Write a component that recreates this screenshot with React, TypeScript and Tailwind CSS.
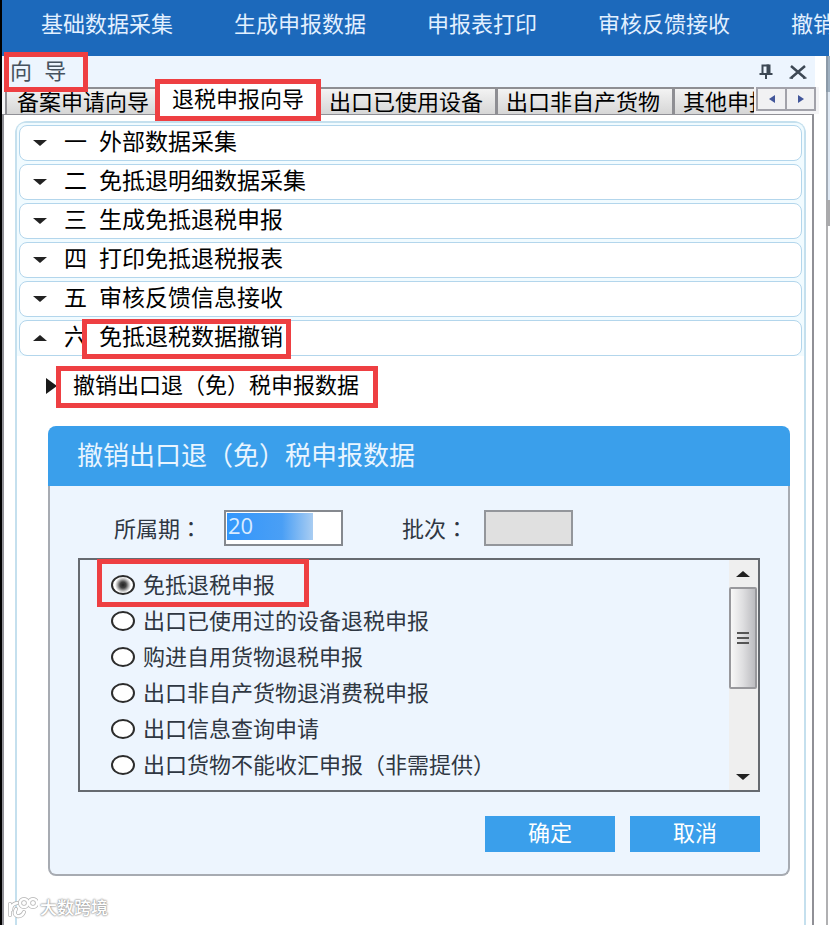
import { useState } from 'react';
import { clsx } from 'clsx';

const MENU_ITEMS = ['基础数据采集', '生成申报数据', '申报表打印', '审核反馈接收', '撤销申报数据'];

const TABS = [
  { label: '备案申请向导', key: 'record' },
  { label: '退税申报向导', key: 'refund' },
  { label: '出口已使用设备', key: 'device' },
  { label: '出口非自产货物', key: 'goods' },
  { label: '其他申报向导', key: 'other' },
];

const STEPS = [
  { no: '一', label: '外部数据采集' },
  { no: '二', label: '免抵退明细数据采集' },
  { no: '三', label: '生成免抵退税申报' },
  { no: '四', label: '打印免抵退税报表' },
  { no: '五', label: '审核反馈信息接收' },
  { no: '六', label: '免抵退税数据撤销' },
];

const OPTIONS = [
  '免抵退税申报',
  '出口已使用过的设备退税申报',
  '购进自用货物退税申报',
  '出口非自产货物退消费税申报',
  '出口信息查询申请',
  '出口货物不能收汇申报（非需提供）',
];

function Mark({ className }: { className: string }) {
  return <span className={clsx('pointer-events-none absolute z-10 border-[5px] border-[#ee3f42]', className)} />;
}

function Colon() {
  return <span className="font-['Noto_Sans_CJK_TC',sans-serif]">：</span>;
}

function Arrow({ up = false, className }: { up?: boolean; className?: string }) {
  return (
    <svg viewBox="0 0 16 8" className={clsx('h-2 w-4 shrink-0', className)}>
      <path d={up ? 'M1 7 L8 1 L15 7 Z' : 'M1 1 H15 L8 7 Z'} fill="#222" />
    </svg>
  );
}

function TopMenu() {
  return (
    <nav className="mr-px flex h-14 items-center gap-[61px] overflow-hidden bg-[#1c69bb] pb-1.5 pl-[39px]">
      {MENU_ITEMS.map((item) => (
        <a key={item} href="#" className="shrink-0 whitespace-nowrap text-[22px] leading-8 text-[#e2f0ff]">
          {item}
        </a>
      ))}
    </nav>
  );
}

function PanelTitle() {
  return (
    <div className="mr-1 flex h-[31px] items-center justify-between bg-[#edf5fe] pr-2 pl-2 text-[#46525f]">
      <h1 className="relative text-[22px] leading-8">
        向&nbsp;&nbsp;导
        <Mark className="-top-1 -left-1.5 h-10 w-[84px]" />
      </h1>
      <div className="flex items-center gap-4">
        <button type="button" aria-label="固定">
          <svg viewBox="0 0 14 15" className="h-[15px] w-3.5" fill="none" stroke="#3d4854">
            <path d="M3.5 9.5 V1.5 H10" strokeWidth="2" />
            <path d="M9.5 0.5 V9.5" strokeWidth="4" />
            <path d="M0.5 10 H13.5" strokeWidth="2" />
            <path d="M7 10 V15" strokeWidth="2" />
          </svg>
        </button>
        <button type="button" aria-label="关闭">
          <svg viewBox="0 0 18 14" className="h-3.5 w-[18px]" fill="none" stroke="#3d4854">
            <path d="M2 1 L16 13 M16 1 L2 13" strokeWidth="2.5" />
            <path d="M0.5 13 H4 M14 13 H17.5" strokeWidth="1.5" />
          </svg>
        </button>
      </div>
    </div>
  );
}

function TabBar({ active, onSelect }: { active: string; onSelect: (key: string) => void }) {
  return (
    <div className="flex h-[27px] bg-[#f4f4f6]">
      <div role="tablist" className="flex min-w-0 flex-1 pl-[3px]">
        <div className="flex min-w-0 flex-1 border-l-2 border-[#8e8e93]">
          {TABS.map((tab, i) =>
            tab.key === active ? (
              <div key={tab.key} className="relative shrink-0">
                <button
                  type="button"
                  role="tab"
                  aria-selected
                  className="relative z-20 px-[17px] text-[22px] leading-[26px] whitespace-nowrap text-black"
                >
                  {tab.label}
                </button>
                <Mark className="-top-2 left-0 h-[42px] w-full bg-white" />
              </div>
            ) : (
              <button
                key={tab.key}
                type="button"
                role="tab"
                aria-selected={false}
                onClick={() => onSelect(tab.key)}
                className={clsx(
                  'h-full border-t-2 border-[#8e8e93] bg-linear-to-b from-[#f3f3f3] to-[#d6d6d6] text-left text-[22px] leading-[28px] whitespace-nowrap text-black',
                  i === 0 ? 'shrink-0 pr-1.5 pl-2.5' : 'pl-2',
                  i > 0 && i < TABS.length - 1 && 'shrink-0 border-r-3 pr-3',
                  i === TABS.length - 1 && 'min-w-0 flex-1 overflow-hidden'
                )}
              >
                {tab.label}
              </button>
            )
          )}
        </div>
      </div>
      <div className="mr-[3px] ml-0.5 flex h-6 w-[60px] shrink-0 border-2 border-[#a2a2aa] bg-[#f1f1f3]">
        <button type="button" aria-label="向左" className="flex flex-1 items-center justify-center border-r-2 border-[#a2a2aa]">
          <svg viewBox="0 0 6 8" className="h-2 w-1.5">
            <path d="M6 0 L0 4 L6 8 Z" fill="#42569a" />
          </svg>
        </button>
        <button type="button" aria-label="向右" className="flex flex-1 items-center justify-center">
          <svg viewBox="0 0 6 8" className="h-2 w-1.5">
            <path d="M0 0 L6 4 L0 8 Z" fill="#42569a" />
          </svg>
        </button>
      </div>
    </div>
  );
}

function Steps({ open, onToggle }: { open: number; onToggle: (i: number) => void }) {
  return (
    <div className="flex flex-col gap-[3px] rounded-t-lg bg-[#f1fbff] p-0.5 pb-0">
      {STEPS.map((step, i) => (
        <button
          key={step.no}
          type="button"
          aria-expanded={open === i}
          onClick={() => onToggle(i)}
          className="flex h-9 items-center rounded-lg border border-[#b3d6ec] bg-white pb-0.5 pl-3 text-left text-[23px] leading-8 text-black"
        >
          <Arrow up={open === i} className="mt-0.5" />
          <span className="ml-4">{step.no}</span>
          <span className="relative ml-3 whitespace-nowrap">
            {step.label}
            {open === i && <Mark className="-top-0.5 -right-2 -left-[17px] h-10" />}
          </span>
        </button>
      ))}
    </div>
  );
}

function ScrollBar() {
  return (
    <div className="flex w-[29px] shrink-0 flex-col items-center bg-[#efefef] pr-px">
      <button type="button" aria-label="向上滚动" className="flex h-[27px] w-full items-center justify-center">
        <Arrow up />
      </button>
      <div className="flex h-[102px] w-full flex-col items-center justify-center gap-[3px] rounded-xs border-2 border-[#98989c] bg-linear-to-r from-[#f8f8f8] via-[#dedee0] to-[#bcbcc0]">
        <span className="h-0.5 w-3 bg-[#555]" />
        <span className="h-0.5 w-3 bg-[#555]" />
        <span className="h-0.5 w-3 bg-[#555]" />
      </div>
      <button type="button" aria-label="向下滚动" className="mt-auto flex h-[27px] w-full items-center justify-center">
        <Arrow />
      </button>
    </div>
  );
}

function RevokeForm() {
  const [period, setPeriod] = useState('20');
  const [choice, setChoice] = useState(OPTIONS[0]);

  return (
    <form onSubmit={(e) => e.preventDefault()} className="mt-[22px] mr-3 ml-[29px]">
      <h2 className="h-[60px] rounded-t-lg bg-[#3a9feb] pl-[29px] text-[26px] leading-[60px] text-[#e9f5ff]">
        撤销出口退（免）税申报数据
      </h2>
      <div className="rounded-b-lg border-2 border-t-0 border-[#a7abb2] bg-[#edf5fe] px-7 pt-6 pb-[22px] text-[22px] text-[#2f3742]">
        <div className="flex items-center pl-9">
          <label htmlFor="period" className="w-[110px] whitespace-nowrap">
            所属期
            <Colon />
          </label>
          <input
            id="period"
            type="text"
            value={period}
            onChange={(e) => setPeriod(e.target.value)}
            className="h-9 w-[119px] border-2 border-[#85898f] bg-white bg-[linear-gradient(to_right,#3396fb_0,#4a9ff5_55px,#a9cdf2_86px)] bg-[length:86px_27px] bg-[position:1px_1px] bg-no-repeat px-0.5 pb-1.5 font-['Open_Sans',sans-serif] text-[22px] leading-7 text-[#d9ebff] outline-none"
          />
          <label htmlFor="batch" className="ml-[59px] w-[82px] whitespace-nowrap">
            批次
            <Colon />
          </label>
          <input id="batch" type="text" disabled className="h-9 w-[89px] border-2 border-[#93969b] bg-[#e0e0e0]" />
        </div>

        <div className="mt-3 flex h-[234px] border-2 border-[#666a70]">
          <div className="flex flex-1 flex-col pt-[7px] pl-[31px]">
            {OPTIONS.map((option) => (
              <label key={option} className="relative flex h-9 items-center gap-2 self-start whitespace-nowrap">
                <input
                  type="radio"
                  name="declare"
                  checked={choice === option}
                  onChange={() => setChoice(option)}
                  className="h-5 w-6 shrink-0 appearance-none rounded-[50%] border-2 border-[#2c2c2c] bg-white checked:bg-[radial-gradient(circle,#222_0,#444_3px,#bbb_6px,#fff_8px)]"
                />
                {option}
                {option === OPTIONS[0] && <Mark className="-top-2 -left-3.5 h-12 w-[212px]" />}
              </label>
            ))}
          </div>
          <ScrollBar />
        </div>

        <div className="mt-6 flex justify-end gap-[15px]">
          <button type="submit" className="h-9 w-[130px] bg-[#3a9feb] leading-9 text-white">
            确定
          </button>
          <button type="button" className="h-9 w-[130px] bg-[#3a9feb] leading-9 text-white">
            取消
          </button>
        </div>
      </div>
    </form>
  );
}

function Watermark() {
  return (
    <div className="absolute bottom-1 left-1.5 flex items-center gap-0.5 text-[17px] leading-6 font-medium text-white [text-shadow:0_0_2px_#999,0_0_2px_#999,0_0_1px_#aaa]">
      <svg viewBox="0 0 30 24" className="h-6 w-[30px]" fill="none" strokeLinecap="round">
        <g stroke="#b5b5b5" strokeWidth="4">
          <path d="M2 7 V18 M3 13 Q3 7 9 6 M16 15 Q14 20 9 19 Q5 17 8 12" />
          <circle cx="16" cy="6" r="4" />
          <circle cx="25" cy="6" r="4" />
        </g>
        <g stroke="#fff" strokeWidth="2.5">
          <path d="M2 7 V18 M3 13 Q3 7 9 6 M16 15 Q14 20 9 19 Q5 17 8 12" />
          <circle cx="16" cy="6" r="4" />
          <circle cx="25" cy="6" r="4" />
        </g>
      </svg>
      大数跨境
    </div>
  );
}

export default function App() {
  const [tab, setTab] = useState('refund');
  const [open, setOpen] = useState(5);

  return (
    <div className="relative flex min-h-screen overflow-hidden border-l-2 border-black bg-white font-['Liberation_Sans','Noto_Sans_CJK_SC',sans-serif]">
      <div className="flex min-w-0 flex-1 flex-col">
        <TopMenu />
        <div className="flex flex-1">
          <main className="flex min-w-0 flex-1 flex-col">
            <PanelTitle />
            <TabBar active={tab} onSelect={setTab} />
            <div className="mr-[5px] flex flex-1 flex-col border-x-2 border-t border-[#909096] pt-1.5 pr-1.5 pl-[11px]">
              <div className="flex-1 rounded-t-xl border-2 border-b-0 border-[#c5e0ee]">
                <Steps open={open} onToggle={(i) => setOpen(open === i ? -1 : i)} />
                {open === 5 && (
                  <div className="px-0.5">
                    <div className="mt-3 ml-[27px] flex h-9 items-center">
                      <svg viewBox="0 0 11 16" className="h-4 w-[11px]">
                        <path d="M0 0 L11 8 L0 16 Z" fill="#1a1a1a" />
                      </svg>
                      <a href="#" className="relative ml-4 text-[22px] leading-8 whitespace-nowrap text-black">
                        撤销出口退（免）税申报数据
                        <Mark className="-top-1 -left-[17px] h-[42px] w-[322px]" />
                      </a>
                    </div>
                    <RevokeForm />
                  </div>
                )}
              </div>
            </div>
          </main>
          <div className="flex w-[11px] shrink-0 flex-col pl-[7px]">
            <div className="h-9 border-l-2 border-[#8c9aa8] bg-[#9fb0c0]" />
            <div className="h-[108px] border-l-2 border-[#a4acb6] bg-[#dfe9f4]" />
            <div className="h-[26px] bg-[#aaaaac]" />
            <div className="flex-1 border-l-2 border-[#b0b0b2]" />
          </div>
        </div>
      </div>
      <Watermark />
    </div>
  );
}
